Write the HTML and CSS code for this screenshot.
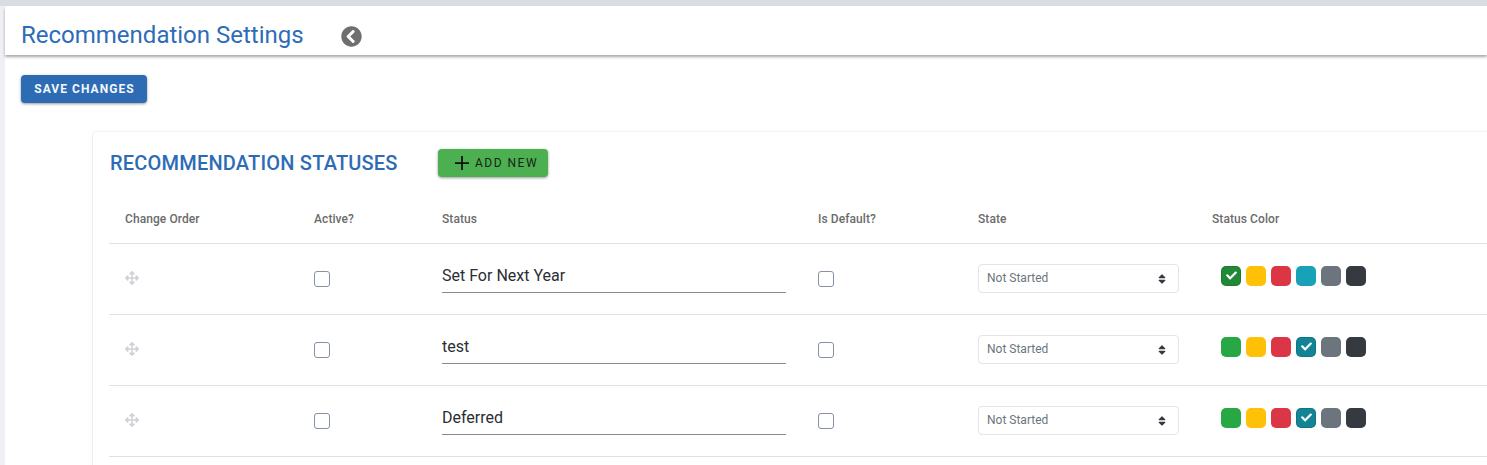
FILE: index.html
```html
<!DOCTYPE html>
<html lang="en">
<head>
    <meta charset="UTF-8">
    <meta name="viewport" content="width=device-width, initial-scale=1.0">
    <title>Recommendation Settings</title>
    <link rel="stylesheet" href="styles.css">
</head>
<body>
    <svg class="icon-defs" aria-hidden="true">
        <symbol id="i-move" viewBox="0 0 512 512"><path d="M352.201 425.775l-79.196 79.196c-9.373 9.373-24.568 9.373-33.941 0l-79.196-79.196c-15.119-15.119-4.411-40.971 16.971-40.97h51.162L228 284H127.196v51.162c0 21.382-25.851 32.09-40.971 16.971L7.029 272.937c-9.373-9.373-9.373-24.569 0-33.941L86.225 159.8c15.119-15.119 40.971-4.411 40.971 16.971V228H228V127.196h-51.23c-21.382 0-32.09-25.851-16.971-40.971l79.196-79.196c9.373-9.373 24.568-9.373 33.941 0l79.196 79.196c15.119 15.119 4.411 40.971-16.971 40.971h-51.162V228h100.804v-51.162c0-21.382 25.851-32.09 40.97-16.971l79.196 79.196c9.373 9.373 9.373 24.569 0 33.941L425.773 352.2c-15.119 15.119-40.971 4.411-40.97-16.971V284H284v100.804h51.23c21.382 0 32.09 25.851 16.971 40.971z"/></symbol>
        <symbol id="i-check" viewBox="0 0 512 512"><path d="M173.898 439.404l-166.4-166.4c-9.997-9.997-9.997-26.206 0-36.204l36.203-36.204c9.997-9.998 26.207-9.998 36.204 0L192 312.69 432.095 72.596c9.997-9.997 26.207-9.997 36.204 0l36.203 36.204c9.997 9.997 9.997 26.206 0 36.204l-294.4 294.401c-9.998 9.997-26.207 9.997-36.204-.001z"/></symbol>
        <symbol id="i-sort" viewBox="0 0 320 512"><path d="M41 288h238c21.4 0 32.1 25.9 17 41L177 448c-9.4 9.4-24.6 9.4-33.9 0L24 329c-15.1-15.1-4.4-41 17-41zm255-105L177 64c-9.4-9.4-24.6-9.4-33.9 0L24 183c-15.1 15.1-4.4 41 17 41h238c21.4 0 32.1-25.9 17-41z"/></symbol>
    </svg>

    <div class="page">
        <header class="topbar">
            <h1>Recommendation Settings</h1>
            <svg class="back-icon" viewBox="0 0 512 512"><path d="M256 504C119 504 8 393 8 256S119 8 256 8s248 111 248 248-111 248-248 248zM142.1 273l135.5 135.5c9.4 9.4 24.6 9.4 33.9 0l17-17c9.4-9.4 9.4-24.6 0-33.9L226.9 256l101.6-101.6c9.4-9.4 9.4-24.6 0-33.9l-17-17c-9.4-9.4-24.6-9.4-33.9 0L142.1 239c-9.4 9.4-9.4 24.6 0 34z"/></svg>
        </header>

        <button class="btn-save" type="button">Save Changes</button>

        <section class="card">
            <div class="card-head">
                <h2>Recommendation Statuses</h2>
                <button class="btn-add" type="button">
                    <svg class="plus-icon" viewBox="0 0 16 16"><path d="M7 0h2v7h7v2H9v7H7V9H0V7h7z"/></svg>
                    Add New
                </button>
            </div>

            <table class="status-table">
                <colgroup>
                    <col class="col-order"><col class="col-active"><col class="col-status"><col class="col-default"><col class="col-state"><col>
                </colgroup>
                <thead>
                    <tr>
                        <th>Change Order</th>
                        <th>Active?</th>
                        <th>Status</th>
                        <th>Is Default?</th>
                        <th>State</th>
                        <th>Status Color</th>
                    </tr>
                </thead>
                <tbody>
                    <tr>
                        <td><svg class="move-icon"><use href="#i-move"/></svg></td>
                        <td><input class="check" type="checkbox"></td>
                        <td><input class="status-input" type="text" value="Set For Next Year"></td>
                        <td><input class="check" type="checkbox"></td>
                        <td>
                            <div class="state-select">Not Started<svg class="sort-icon"><use href="#i-sort"/></svg></div>
                        </td>
                        <td>
                            <div class="swatches">
                                <span class="swatch green selected"><svg class="check-icon"><use href="#i-check"/></svg></span>
                                <span class="swatch yellow"></span>
                                <span class="swatch red"></span>
                                <span class="swatch teal"></span>
                                <span class="swatch gray"></span>
                                <span class="swatch dark"></span>
                            </div>
                        </td>
                    </tr>
                    <tr>
                        <td><svg class="move-icon"><use href="#i-move"/></svg></td>
                        <td><input class="check" type="checkbox"></td>
                        <td><input class="status-input" type="text" value="test"></td>
                        <td><input class="check" type="checkbox"></td>
                        <td>
                            <div class="state-select">Not Started<svg class="sort-icon"><use href="#i-sort"/></svg></div>
                        </td>
                        <td>
                            <div class="swatches">
                                <span class="swatch green"></span>
                                <span class="swatch yellow"></span>
                                <span class="swatch red"></span>
                                <span class="swatch teal selected"><svg class="check-icon"><use href="#i-check"/></svg></span>
                                <span class="swatch gray"></span>
                                <span class="swatch dark"></span>
                            </div>
                        </td>
                    </tr>
                    <tr>
                        <td><svg class="move-icon"><use href="#i-move"/></svg></td>
                        <td><input class="check" type="checkbox"></td>
                        <td><input class="status-input" type="text" value="Deferred"></td>
                        <td><input class="check" type="checkbox"></td>
                        <td>
                            <div class="state-select">Not Started<svg class="sort-icon"><use href="#i-sort"/></svg></div>
                        </td>
                        <td>
                            <div class="swatches">
                                <span class="swatch green"></span>
                                <span class="swatch yellow"></span>
                                <span class="swatch red"></span>
                                <span class="swatch teal selected"><svg class="check-icon"><use href="#i-check"/></svg></span>
                                <span class="swatch gray"></span>
                                <span class="swatch dark"></span>
                            </div>
                        </td>
                    </tr>
                </tbody>
            </table>
        </section>
    </div>
</body>
</html>
```

FILE: styles.css
```css
html, body {
    height: 100%;
}
body {
    font-family: Roboto, "Liberation Sans", sans-serif;
    background-color: #eef0f3;
    margin: 0;
    overflow: hidden;
    border-top: 6px solid #d9dde3;
    box-sizing: border-box;
}
.icon-defs {
    display: none;
}
.page {
    margin-left: 5px;
    height: 100%;
    background-color: white;
}
.topbar {
    display: flex;
    align-items: center;
    height: 49px;
    padding-left: 16px;
    background-color: white;
    box-shadow: 0 2px 3px rgba(0, 0, 0, 0.35);
    border-radius: 3px 0 0 0;
}
h1 {
    font-size: 24px;
    font-weight: 400;
    color: #2d6db8;
    margin: 0;
    padding-top: 8px;
    width: 320px;
}
.back-icon {
    width: 21px;
    height: 21px;
    margin-top: 11px;
    fill: #6f6f6f;
}
.btn-save {
    display: block;
    margin: 20px 0 0 16px;
    width: 126px;
    height: 28px;
    padding: 0 0 0 1px;
    border: none;
    border-radius: 4px;
    background-color: #2d6cb5;
    color: #f4f7fb;
    font-family: inherit;
    font-size: 12px;
    font-weight: 700;
    letter-spacing: 1.05px;
    text-transform: uppercase;
    box-shadow: 0 1px 3px rgba(0, 0, 0, 0.4);
}
.card {
    margin: 28px 0 0 87px;
    padding: 0 0 20px 16px;
    border-left: 1px solid #f0f0f0;
    border-top: 1px solid #f4f4f4;
    border-radius: 5px 0 0 0;
    box-shadow: -1px 0 2px rgba(0, 0, 0, 0.03);
}
.card-head {
    display: flex;
    align-items: center;
    height: 62px;
}
h2 {
    font-size: 20px;
    font-weight: 500;
    letter-spacing: 0.2px;
    color: #2d6cb5;
    text-transform: uppercase;
    margin: 0 0 0 1px;
    width: 328px;
}
.btn-add {
    display: flex;
    align-items: center;
    gap: 6px;
    width: 110px;
    height: 28px;
    padding: 0 0 0 17px;
    border: none;
    border-radius: 4px;
    background-color: #4caf50;
    color: #1b1f1b;
    font-family: inherit;
    font-size: 12px;
    font-weight: 400;
    letter-spacing: 1.5px;
    text-transform: uppercase;
    box-shadow: 0 1px 3px rgba(0, 0, 0, 0.4);
}
.plus-icon {
    width: 14px;
    height: 14px;
    fill: #111;
}
.status-table {
    width: 100%;
    table-layout: fixed;
    border-collapse: collapse;
}
.col-order {
    width: 189px;
}
.col-active {
    width: 128px;
}
.col-status {
    width: 376px;
}
.col-default {
    width: 160px;
}
.col-state {
    width: 234px;
}
th {
    height: 49px;
    padding: 0 0 0 16px;
    text-align: left;
    font-size: 12px;
    font-weight: 500;
    letter-spacing: 0.08px;
    color: #6b6b6b;
    border-bottom: 1px solid #dfe1e4;
}
td {
    height: 70px;
    padding: 0 0 0 16px;
    border-bottom: 1px solid #dfe1e4;
    vertical-align: middle;
}
.move-icon {
    display: block;
    width: 14px;
    height: 14px;
    margin-top: -2px;
    fill: #cfd2d6;
}
.check {
    appearance: none;
    display: block;
    width: 16px;
    height: 16px;
    margin: 0;
    background-color: white;
    border: 1px solid #8592a3;
    border-radius: 3px;
}
.status-input {
    display: block;
    box-sizing: border-box;
    width: 344px;
    height: 34px;
    padding: 0;
    margin-top: -7px;
    border: none;
    border-bottom: 1px solid #8a8a8a;
    outline: none;
    font-family: inherit;
    font-size: 16px;
    color: #2a2e33;
}
.state-select {
    display: flex;
    align-items: center;
    justify-content: space-between;
    box-sizing: border-box;
    width: 201px;
    height: 29px;
    padding: 0 12px 2px 8px;
    margin-top: -1px;
    border: 1px solid #e1e4e8;
    border-radius: 4px;
    font-size: 12px;
    color: #6c757d;
}
.sort-icon {
    width: 8px;
    height: 12px;
    margin-top: 2px;
    fill: #343a40;
}
.swatches {
    display: flex;
    gap: 5px;
    padding-left: 9px;
    margin-top: -7px;
}
.swatch {
    display: flex;
    align-items: center;
    justify-content: center;
    width: 20px;
    height: 20px;
    border-radius: 5px;
}
.swatch.selected {
    box-shadow: inset 0 0 0 1px rgba(0, 0, 0, 0.12);
}
.green {
    background-color: #28a745;
}
.green.selected {
    background-color: #218838;
}
.yellow {
    background-color: #ffc107;
}
.red {
    background-color: #dc3545;
}
.teal {
    background-color: #17a2b8;
}
.teal.selected {
    background-color: #138496;
}
.gray {
    background-color: #6c757d;
}
.dark {
    background-color: #343a40;
}
.check-icon {
    width: 11px;
    height: 11px;
    fill: white;
}
```
